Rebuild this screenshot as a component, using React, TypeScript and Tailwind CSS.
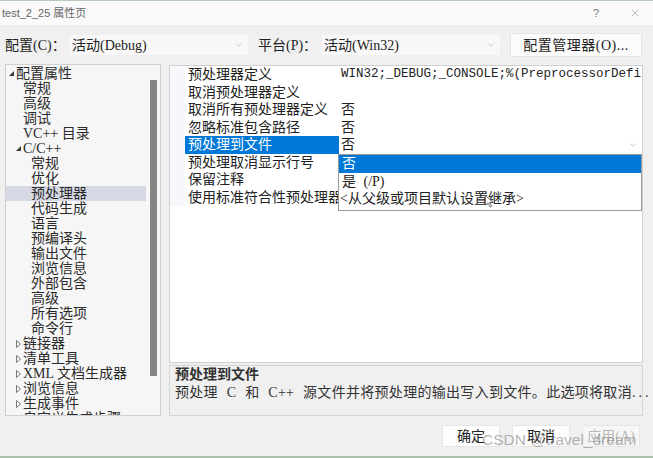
import { X, ChevronDown } from "lucide-react";

type TreeNode = { label: string; level: 0 | 1 | 2; arrow?: "open" | "closed"; selected?: boolean };

const tree: TreeNode[] = [
  { label: "配置属性", level: 0, arrow: "open" },
  { label: "常规", level: 1 },
  { label: "高级", level: 1 },
  { label: "调试", level: 1 },
  { label: "VC++ 目录", level: 1 },
  { label: "C/C++", level: 1, arrow: "open" },
  { label: "常规", level: 2 },
  { label: "优化", level: 2 },
  { label: "预处理器", level: 2, selected: true },
  { label: "代码生成", level: 2 },
  { label: "语言", level: 2 },
  { label: "预编译头", level: 2 },
  { label: "输出文件", level: 2 },
  { label: "浏览信息", level: 2 },
  { label: "外部包含", level: 2 },
  { label: "高级", level: 2 },
  { label: "所有选项", level: 2 },
  { label: "命令行", level: 2 },
  { label: "链接器", level: 1, arrow: "closed" },
  { label: "清单工具", level: 1, arrow: "closed" },
  { label: "XML 文档生成器", level: 1, arrow: "closed" },
  { label: "浏览信息", level: 1, arrow: "closed" },
  { label: "生成事件", level: 1, arrow: "closed" },
  { label: "自定义生成步骤", level: 1, arrow: "closed" },
];

const indent = ["pl-[3px]", "pl-[10px]", "pl-[18px]"];

const props = [
  { label: "预处理器定义", value: "WIN32;_DEBUG;_CONSOLE;%(PreprocessorDefi", mono: true },
  { label: "取消预处理器定义", value: "" },
  { label: "取消所有预处理器定义", value: "否" },
  { label: "忽略标准包含路径", value: "否" },
  { label: "预处理到文件", value: "否", selected: true },
  { label: "预处理取消显示行号", value: "" },
  { label: "保留注释", value: "" },
  { label: "使用标准符合性预处理器", value: "" },
];

const song = "font-['Liberation_Serif','Noto_Sans_CJK_SC',serif]";

function Arrow({ kind }: { kind?: "open" | "closed" }) {
  return (
    <span className="w-[7px] h-[15px] flex items-center justify-start shrink-0">
      {kind === "open" && (
        <svg width="5" height="5" viewBox="0 0 5 5">
          <polygon points="5,0 5,5 0,5" fill="#3a3a3a" />
        </svg>
      )}
      {kind === "closed" && (
        <svg width="5" height="8" viewBox="0 0 5 8">
          <polygon points="0.5,0.5 4.5,4 0.5,7.5" fill="none" stroke="#7a7a7a" strokeWidth="1" />
        </svg>
      )}
    </span>
  );
}

function Select({ text }: { text: string }) {
  return (
    <div className="w-[178px] h-[20px] bg-[#f8f8f8] flex items-center justify-between pl-[2px] pr-[4px]">
      <span className="text-[14px] text-[#222]">{text}</span>
      <ChevronDown size={10} strokeWidth={1.2} className="text-[#999]" />
    </div>
  );
}

export default function App() {
  return (
    <div className={`w-[653px] h-[458px] bg-[#f0f0f0] flex flex-col relative overflow-hidden border-t border-[#b9cbb9] ${song}`}>
      {/* Title bar */}
      <div className="h-[24px] bg-[#fafafa] flex items-center justify-between pl-[2px] pr-[12px] font-['Liberation_Sans','Noto_Sans_CJK_SC',sans-serif]">
        <span className="text-[11px] text-[#666]">test_2_25 属性页</span>
        <div className="flex items-center gap-[30px] text-[#777]">
          <span className="text-[11px]">?</span>
          <X size={12} strokeWidth={1} />
        </div>
      </div>

      {/* Config row */}
      <div className="h-[24px] mt-[8px] flex items-center text-[14px] text-[#222]">
        <span className="ml-[5px] w-[65px]">配置(C)：</span>
        <Select text="活动(Debug)" />
        <span className="ml-[10px] w-[64px]">平台(P)：</span>
        <Select text="活动(Win32)" />
        <button className="ml-[10px] w-[132px] h-[24px] bg-[#fbfbfb] border border-[#e4e4e4] text-[14px] text-[#222] tracking-[0.5px]">
          配置管理器(O)...
        </button>
      </div>

      {/* Main */}
      <div className="mt-[7px] h-[352px] flex">
        {/* Tree */}
        <div className="ml-[5px] w-[156px] border border-[#d0d0d0] bg-[#f6f6f6] flex overflow-hidden">
          <div className="flex-1 pt-[1px] text-[14px] text-[#2a2a2a]">
            {tree.map((n, i) => (
              <div
                key={i}
                className={`h-[15px] leading-[15px] flex items-center whitespace-nowrap ${indent[n.level]} ${n.selected ? "bg-[#d6d8e4]" : ""}`}
              >
                <Arrow kind={n.arrow} />
                <span>{n.label}</span>
              </div>
            ))}
          </div>
          <div className="w-[14px] flex justify-center pt-[15px]">
            <div className="w-[7px] h-[296px] bg-[#858585]" />
          </div>
        </div>

        {/* Right side */}
        <div className="ml-[8px] w-[474px] flex flex-col">
          <div className="mt-[1px] h-[298px] bg-white border border-[#d0d0d0] relative text-[14px] text-[#222]">
            {props.map((p, i) => (
              <div key={i} className="h-[17.5px] flex items-center">
                <div className="w-[15px] h-full bg-[#f7f8fc]" />
                <div
                  className={`w-[154px] h-full pl-[3px] flex items-center overflow-hidden whitespace-nowrap ${p.selected ? "bg-[#0078d7] text-white" : ""}`}
                >
                  {p.label}
                </div>
                <div className="flex-1 h-full pl-[2px] pr-[4px] flex items-center justify-between overflow-hidden whitespace-nowrap">
                  <span className={p.mono ? "font-['Liberation_Mono',monospace] text-[12.5px]" : ""}>{p.value}</span>
                  {p.selected && <ChevronDown size={10} strokeWidth={1.2} className="text-[#888]" />}
                </div>
              </div>
            ))}

            {/* Dropdown list */}
            <div className="absolute left-[168px] top-[88px] w-[304px] h-[57px] bg-white border border-[#9a9a9a] text-[14px]">
              <div className="h-[17.5px] bg-[#0078d7] text-white flex items-center pl-[3px]">否</div>
              <div className="h-[17.5px] flex items-center pl-[3px] [word-spacing:4px]">是 (/P)</div>
              <div className="h-[17.5px] flex items-center pl-[1px]">&lt;从父级或项目默认设置继承&gt;</div>
            </div>

            {/* Mouse cursor */}
            <svg className="absolute left-[315px] top-[129px]" width="9" height="13" viewBox="0 0 9 13">
              <polygon points="0.5,0.5 0.5,10 3,7.8 5,12 6.5,11.3 4.6,7.3 8,7.3" fill="white" stroke="#555" strokeWidth="0.8" />
            </svg>
          </div>

          <div className="mt-[2px] h-[51px] border border-[#d6d6d6] bg-[#f0f0f0] px-[5px] text-[14px] text-[#333] leading-[18px]">
            <div className="font-bold">预处理到文件</div>
            <div className="whitespace-nowrap tracking-[0.3px] [word-spacing:5px]">
              预处理 C 和 C++ 源文件并将预处理的输出写入到文件。此选项将取消<span className="tracking-[3px]">...</span>
            </div>
          </div>
        </div>
      </div>

      {/* Buttons */}
      <div className="mt-[9px] h-[22px] flex justify-end gap-[12px] pr-[13px] text-[14px]">
        <button className="w-[58px] h-[22px] bg-[#fdfdfd] border border-[#e6e6e6] text-[#222]">确定</button>
        <button className="w-[58px] h-[22px] bg-[#fdfdfd] border border-[#e6e6e6] text-[#222]">取消</button>
        <button className="w-[58px] h-[22px] bg-[#f6f6f6] border border-[#e6e6e6] text-[#b8b8b8]">应用(A)</button>
      </div>

      {/* Watermark */}
      <div className="absolute left-[482px] top-[427px] text-[15.5px] font-['Liberation_Sans',sans-serif] text-[rgba(110,110,110,0.5)] whitespace-nowrap">
        CSDN @travel_dream
      </div>

      <div className="absolute left-0 bottom-0 w-full h-[2px] bg-[#a9c2a9]" />
    </div>
  );
}
